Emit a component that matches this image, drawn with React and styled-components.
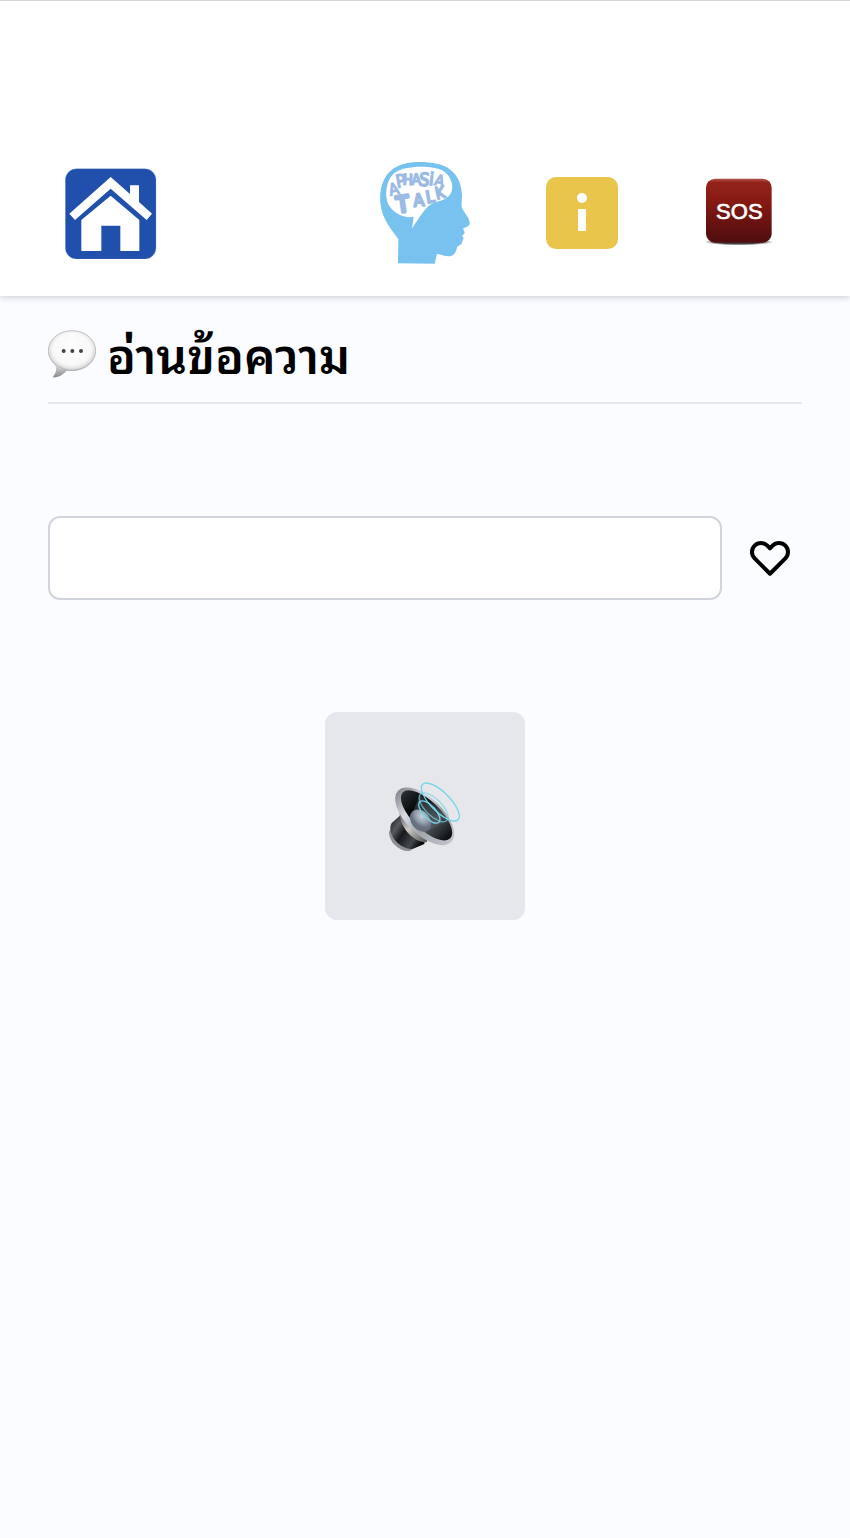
import React from "react";
import styled, { createGlobalStyle } from "styled-components";

const GlobalStyle = createGlobalStyle`
  * { box-sizing: border-box; }
  body {
    margin: 0;
    background: #fbfcff;
    color: #000;
    font-family: "Noto Sans Thai Looped", "Noto Looped Thai", Loma, Garuda, Waree, "Sarabun", "Noto Sans", "Liberation Sans", sans-serif;
  }
  button, input { font: inherit; color: inherit; }
`;

const Page = styled.div`
  min-height: 100vh;
`;

const Header = styled.header`
  padding: 160px 32px 31px;
  border-top: 1px solid #d4d5d6;
  background: #fff;
  box-shadow: 0 2px 6px rgba(0, 0, 0, 0.16);
`;

const Nav = styled.nav`
  display: grid;
  grid-template-columns: repeat(5, 1fr);
  align-items: center;
  justify-items: center;
  min-height: 104px;
`;

const NavLink = styled.a`
  display: block;
  grid-column: ${(p) => p.$column};
  text-decoration: none;
`;

const Icon = styled.svg`
  display: block;
  width: ${(p) => p.$w}px;
  height: ${(p) => p.$h}px;
`;

const Main = styled.main`
  padding: 24px 48px;
`;

const Title = styled.h1`
  display: flex;
  align-items: center;
  gap: 10px;
  height: 84px;
  margin: 0;
  padding-bottom: 16px;
  border-bottom: 2px solid #e5e7eb;
  font-size: 48px;
  font-weight: 600;
  line-height: 64px;
`;

const Composer = styled.div`
  display: flex;
  align-items: center;
  gap: 24px;
  margin: 112px 0;
  padding-right: 8px;
`;

const TextInput = styled.input`
  flex: 1;
  min-width: 0;
  height: 84px;
  padding: 16px 24px;
  border: 2px solid #d1d5db;
  border-radius: 12px;
  background: #fff;
  font-size: 32px;
`;

const IconButton = styled.button`
  display: flex;
  padding: 0;
  border: 0;
  background: none;
  cursor: pointer;
`;

const SpeakButton = styled.button`
  display: flex;
  align-items: center;
  justify-content: center;
  width: 200px;
  height: 208px;
  margin: 0 auto;
  border: 0;
  border-radius: 12px;
  background: #e5e7eb;
  cursor: pointer;
`;

function HomeIcon() {
  return (
    <Icon $w={92} $h={92} viewBox="45 36 276 276" aria-hidden="true">
      <rect x="46" y="41" width="272" height="271" rx="34" fill="#2050ab" stroke="#7f9bd0" strokeWidth="1" />
      <path fill="#fff" d="M182 66 240 117V91h27v50l39 35-16 19L182 101 75 195 58 176Z" />
      <path fill="#fff" d="M182 122 268 195v93h-57v-76h-57v76H94v-93Z" />
    </Icon>
  );
}

// [letter, centre x, centre y, font size, rotation, stroke width]
const letters = [
  ["A", 71, 117, 48, -14, 4],
  ["P", 92, 92, 54, -10, 4],
  ["H", 114, 88, 44, 2, 5],
  ["A", 139, 87, 46, -2, 4],
  ["S", 163, 88, 54, 4, 5],
  ["i", 185, 86, 52, 6, 5],
  ["A", 209, 92, 46, 14, 4],
  ["T", 98, 162, 66, -8, 11],
  ["A", 146, 150, 52, -6, 6],
  ["L", 180, 140, 50, -10, 6],
  ["K", 210, 128, 50, -12, 5],
];

const LogoLetter = styled.text`
  font-family: "Liberation Sans Narrow", "DejaVu Sans Condensed", "Liberation Sans", sans-serif;
  font-weight: 400;
  text-anchor: middle;
  fill: #9bbbe5;
  stroke: #9bbbe5;
  stroke-linecap: round;
  stroke-linejoin: round;
`;

function BrainLogo() {
  return (
    <Icon $w={90} $h={102} viewBox="30 36 270 306" role="img" aria-label="Aphasia Talk">
      <path
        fill="#77c2ee"
        d="M84 340 85 268C70 243 36 212 31 158 27 97 52 55 101 42 142 31 212 36 239 58 266 78 275 106 276 138 276 151 273 164 276 174 282 187 296 201 299 216 302 227 290 232 281 234 277 237 284 243 284 250L276 258C286 265 276 272 276 278 275 286 263 286 261 292 258 309 251 319 235 319 222 319 212 313 201 312L194 341Z"
      />
      <path
        fill="#fff"
        d="M126 236 131 200C99 207 68 187 55 163 43 136 48 91 72 70 99 46 186 45 216 61 240 74 252 102 245 124 239 144 220 151 193 158 169 165 151 198 126 236Z"
      />
      {letters.map(([char, x, y, size, turn, weight], i) => (
        <LogoLetter key={i} x={x} y={y + size * 0.36} fontSize={size} strokeWidth={weight} transform={`rotate(${turn} ${x} ${y})`}>
          {char}
        </LogoLetter>
      ))}
    </Icon>
  );
}

function InfoIcon() {
  return (
    <Icon $w={72} $h={72} viewBox="0 0 72 72" aria-hidden="true">
      <rect width="72" height="72" rx="10" fill="#eac54b" />
      <circle cx="36" cy="21" r="5" fill="#fff" />
      <path fill="#fff" d="M32 32h8v22h-8z" />
    </Icon>
  );
}

const SosText = styled.text`
  font-family: "Liberation Sans", Arial, sans-serif;
  font-size: 66px;
  text-anchor: middle;
  fill: #fff;
  stroke: #fff;
  stroke-width: 2px;
`;

function SosIcon() {
  return (
    <Icon $w={70} $h={70} viewBox="27 38 210 210" role="img" aria-label="SOS">
      <defs>
        <linearGradient id="sosFill" x1="0" y1="0" x2="0" y2="1">
          <stop offset="0" stopColor="#b4544c" />
          <stop offset="0.06" stopColor="#93231a" />
          <stop offset="0.35" stopColor="#861a12" />
          <stop offset="0.58" stopColor="#711512" />
          <stop offset="1" stopColor="#500c0e" />
        </linearGradient>
        <radialGradient id="sosShade">
          <stop offset="0.6" stopColor="#222" stopOpacity="0.85" />
          <stop offset="1" stopColor="#222" stopOpacity="0" />
        </radialGradient>
      </defs>
      <ellipse cx="132" cy="230" rx="104" ry="10" fill="url(#sosShade)" />
      <rect x="33" y="40" width="197" height="192" rx="27" fill="url(#sosFill)" />
      <SosText x="133" y="160">SOS</SosText>
    </Icon>
  );
}

function SpeechBubble() {
  return (
    <Icon $w={49} $h={49} viewBox="24 42 147 147" aria-hidden="true">
      <defs>
        <radialGradient id="bubble" cx="0.5" cy="0.46" r="0.55">
          <stop offset="0" stopColor="#fff" />
          <stop offset="0.72" stopColor="#f8f8f8" />
          <stop offset="0.88" stopColor="#e2e2e2" />
          <stop offset="1" stopColor="#ababab" />
        </radialGradient>
        <linearGradient id="bubbleTail" x1="0" y1="0" x2="0" y2="1">
          <stop offset="0" stopColor="#dedede" />
          <stop offset="1" stopColor="#888" />
        </linearGradient>
      </defs>
      <ellipse cx="96" cy="107" rx="71" ry="60" fill="url(#bubble)" stroke="#a9a9a9" strokeWidth="2" />
      <path fill="url(#bubbleTail)" d="M44 149C54 164 45 177 38 187 52 190 72 178 82 165 68 165 54 158 44 149Z" />
      <circle cx="71" cy="108" r="6" fill="#444" />
      <circle cx="97" cy="108" r="6" fill="#444" />
      <circle cx="123" cy="108" r="6" fill="#444" />
    </Icon>
  );
}

function HeartIcon() {
  return (
    <Icon $w={48} $h={48} viewBox="0 0.5 24 24" fill="none" stroke="currentColor" strokeWidth="2" strokeLinecap="round" strokeLinejoin="round" aria-hidden="true">
      <path d="M4.318 6.318a4.5 4.5 0 0 0 0 6.364L12 20.364l7.682-7.682a4.5 4.5 0 0 0-6.364-6.364L12 7.636l-1.318-1.318a4.5 4.5 0 0 0-6.364 0z" />
    </Icon>
  );
}

function SpeakerIcon() {
  return (
    <Icon $w={76} $h={72} viewBox="36 45 228 216" aria-hidden="true">
      <defs>
        <linearGradient id="magnet" x1="0" y1="0" x2="1" y2="0.65">
          <stop offset="0" stopColor="#111315" />
          <stop offset="0.3" stopColor="#565a5e" />
          <stop offset="0.5" stopColor="#17191c" />
          <stop offset="0.8" stopColor="#44484c" />
          <stop offset="1" stopColor="#080909" />
        </linearGradient>
        <linearGradient id="neck" x1="0" y1="0" x2="1" y2="1">
          <stop offset="0" stopColor="#55585c" />
          <stop offset="0.45" stopColor="#c9c7c3" />
          <stop offset="1" stopColor="#4a4d50" />
        </linearGradient>
        <linearGradient id="rim" x1="0" y1="0" x2="1" y2="0">
          <stop offset="0" stopColor="#85888e" />
          <stop offset="0.3" stopColor="#d9dce2" />
          <stop offset="0.6" stopColor="#a2a5ac" />
          <stop offset="1" stopColor="#c0c3ca" />
        </linearGradient>
        <linearGradient id="cone" x1="0" y1="0" x2="1" y2="0">
          <stop offset="0" stopColor="#292e30" />
          <stop offset="0.3" stopColor="#050809" />
          <stop offset="0.65" stopColor="#4b5357" />
          <stop offset="1" stopColor="#080b0d" />
        </linearGradient>
        <radialGradient id="dome" cx="0.4" cy="0.3">
          <stop offset="0" stopColor="#c6d0dc" />
          <stop offset="0.6" stopColor="#939fad" />
          <stop offset="1" stopColor="#66717d" />
        </radialGradient>
      </defs>
      <path fill="#8d9093" d="M42 200C41 230 72 260 104 258L118 250 50 188Z" />
      <path fill="url(#magnet)" d="M78 149 50 174C40 192 49 217 68 234 84 248 103 256 118 250L148 237 150 215Z" />
      <path fill="url(#neck)" d="M74 135C70 180 110 232 155 232L160 210Z" />
      <g transform="rotate(44 149 154)">
        <ellipse cx="149" cy="154" rx="111" ry="55" fill="url(#rim)" />
        <ellipse cx="151" cy="148" rx="99" ry="42" fill="url(#cone)" />
      </g>
      <path fill="#535b60" d="M112 147 135 86 204 174 160 197Z" opacity="0.5" />
      <ellipse cx="137" cy="167" rx="37" ry="28" fill="url(#dome)" transform="rotate(48 137 167)" />
      <g fill="none" stroke="#76d5e8" strokeWidth="4">
        <ellipse cx="196" cy="111" rx="75" ry="29" transform="rotate(45 196 111)" />
        <ellipse cx="176" cy="127" rx="56" ry="25" transform="rotate(45 176 127)" opacity="0.7" />
        <ellipse cx="163" cy="141" rx="42" ry="19" transform="rotate(47 163 141)" />
      </g>
    </Icon>
  );
}

export default function App() {
  return (
    <Page>
      <GlobalStyle />
      <Header>
        <Nav>
          <NavLink href="#home" $column={1} aria-label="หน้าหลัก"><HomeIcon /></NavLink>
          <NavLink href="#about" $column={3} aria-label="Aphasia Talk"><BrainLogo /></NavLink>
          <NavLink href="#info" $column={4} aria-label="ข้อมูล"><InfoIcon /></NavLink>
          <NavLink href="#sos" $column={5} aria-label="SOS"><SosIcon /></NavLink>
        </Nav>
      </Header>
      <Main>
        <Title><SpeechBubble />อ่านข้อความ</Title>
        <Composer>
          <TextInput type="text" aria-label="ข้อความ" />
          <IconButton type="button" aria-label="บันทึกรายการโปรด"><HeartIcon /></IconButton>
        </Composer>
        <SpeakButton type="button" aria-label="อ่านออกเสียง"><SpeakerIcon /></SpeakButton>
      </Main>
    </Page>
  );
}
